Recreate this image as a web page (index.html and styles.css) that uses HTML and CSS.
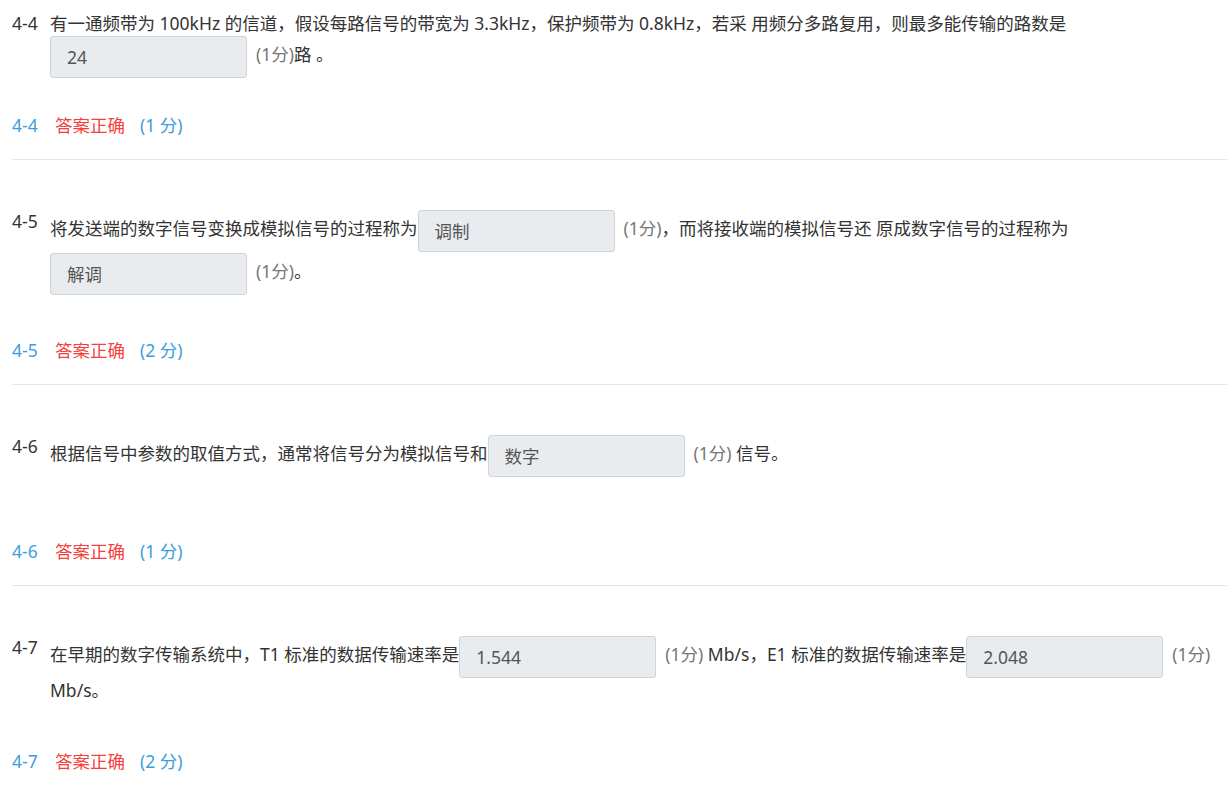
FILE: index.html
```html
<!DOCTYPE html>
<html>
<head>
    <meta charset="UTF-8">
    <meta name="viewport" content="width=device-width, initial-scale=1.0">
    <title>判断填空</title>
    <link rel="stylesheet" href="styles.css">
</head>
<body>
    <!-- 4-4 -->
    <div class="item item_first">
        <div class="question">
            <span class="q_num">4-4</span>
            <div class="q_body">有一通频带为 100kHz 的信道，假设每路信号的带宽为 3.3kHz，保护频带为 0.8kHz，若采 用频分多路复用，则最多能传输的路数是<span class="blank">24</span><span class="score">(1分)</span>路 。</div>
        </div>
        <div class="answer gap_a">
            <span class="a_num">4-4</span>
            <span class="a_ok">答案正确</span>
            <span class="a_score">(1 分)</span>
        </div>
    </div>

    <!-- 4-5 -->
    <div class="item">
        <div class="question">
            <span class="q_num">4-5</span>
            <div class="q_body">将发送端的数字信号变换成模拟信号的过程称为<span class="blank">调制</span><span class="score">(1分)</span>，而将接收端的模拟信号还 原成数字信号的过程称为<span class="blank">解调</span><span class="score">(1分)</span>。</div>
        </div>
        <div class="answer gap_b">
            <span class="a_num">4-5</span>
            <span class="a_ok">答案正确</span>
            <span class="a_score">(2 分)</span>
        </div>
    </div>

    <!-- 4-6 -->
    <div class="item">
        <div class="question">
            <span class="q_num">4-6</span>
            <div class="q_body">根据信号中参数的取值方式，通常将信号分为模拟信号和<span class="blank">数字</span><span class="score">(1分)</span> 信号。</div>
        </div>
        <div class="answer gap_c">
            <span class="a_num">4-6</span>
            <span class="a_ok">答案正确</span>
            <span class="a_score">(1 分)</span>
        </div>
    </div>

    <!-- 4-7 -->
    <div class="item item_last">
        <div class="question">
            <span class="q_num">4-7</span>
            <div class="q_body">在早期的数字传输系统中，T1 标准的数据传输速率是<span class="blank">1.544</span><span class="score">(1分)</span> Mb/s，E1 标准的数据传输速率是<span class="blank">2.048</span><span class="score">(1分)</span> Mb/s。</div>
        </div>
        <div class="answer gap_d">
            <span class="a_num">4-7</span>
            <span class="a_ok">答案正确</span>
            <span class="a_score">(2 分)</span>
        </div>
    </div>
</body>
</html>
```

FILE: styles.css
```css
/*公共样式*/
*{margin:0;padding:0;box-sizing:border-box;}
html,body{width:100%;height:100%;}
body{
    background:#fff;
    color:#333;
    font-family:"Segoe UI","Noto Sans","Noto Sans CJK SC",sans-serif;
    font-size:17.5px;
    padding:11px 0 0 12px;
    overflow:hidden;
}

/*每道题：题目 + 判题结果 + 分隔线*/
.item{padding-top:49px;border-bottom:1px solid #e5e5e5;padding-bottom:22px;}
.item_first{padding-top:0;}
.item_last{border-bottom:none;}

.question{display:flex;align-items:flex-start;}
.q_num{width:38px;flex-shrink:0;line-height:24px;}
.q_body{flex:1;line-height:24px;}

/*填空框*/
.blank{
    display:inline-flex;align-items:center;
    width:197px;height:42px;
    margin:1px 0 0 0;
    padding:0 16px;
    background:#e9ecef;
    border:1px solid #ced4da;
    border-radius:3px;
    color:#555;
    vertical-align:middle;
}
.score{color:#777;margin-left:9px;}

/*判题结果*/
.answer{line-height:24px;display:flex;}
.a_num{color:#3c9de0;width:43px;}
.a_ok{color:#f5403c;width:85px;}
.a_score{color:#3c9de0;}

.gap_a{margin-top:35px;}
.gap_b{margin-top:43px;}
.gap_c{margin-top:62px;}
.gap_d{margin-top:47px;}
```
